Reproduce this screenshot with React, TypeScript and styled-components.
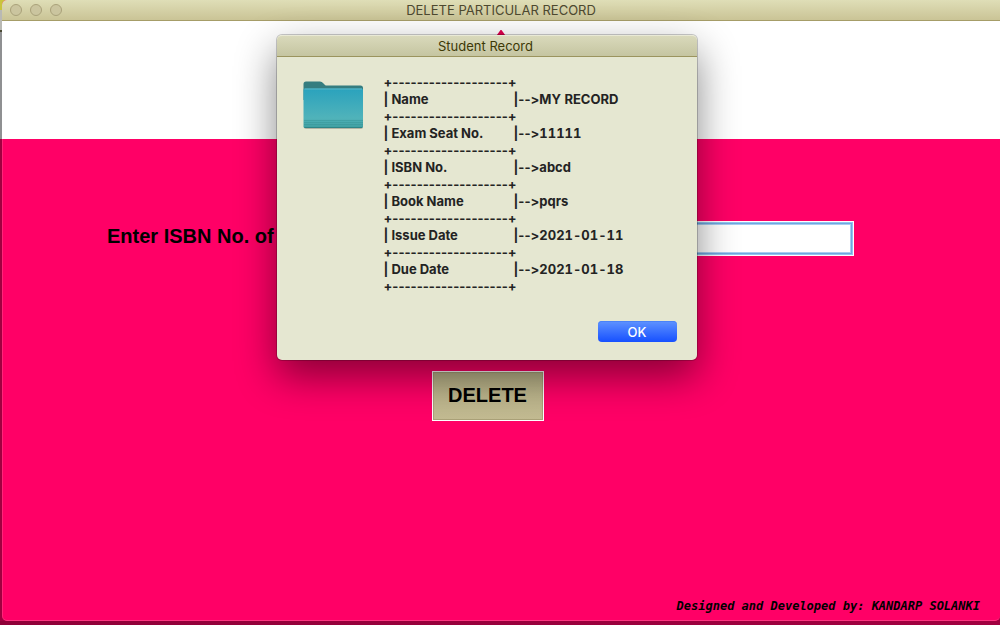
import React from "react";
import styled, { createGlobalStyle } from "styled-components";

const GlobalStyle = createGlobalStyle`
  * { box-sizing: border-box; }
  body { margin: 0; font-family: Inter, "Liberation Sans", sans-serif; }
`;

const Desktop = styled.div`
  display: flex;
  min-height: 100vh;
  padding: 0 0 4px 2px;
  overflow: hidden;
  background:
    linear-gradient(90deg, #8f0038, #a10040) bottom / 100% 4px no-repeat,
    linear-gradient(#c9c43e 0 10px, #b9b9b4 10px 30px, #4b4a35 30px 32px, #8f9092 32px 139px, #a00040 139px);
`;

const Window = styled.div`
  position: relative;
  flex: 1;
  display: flex;
  flex-direction: column;
  background: #ff0066;
  border-radius: 5px 0 5px 5px;
  border-bottom: 1px solid #ff3380;
  border-left: 1px solid #ff2478;
`;

const TitleBar = styled.header`
  position: relative;
  display: flex;
  align-items: center;
  justify-content: center;
  height: 21px;
  margin-left: -1px;
  background: linear-gradient(#dfdeb7, #cac496);
  border-bottom: 1px solid #a69d68;
  border-top-left-radius: 5px;
`;

const Title = styled.h1`
  margin: 0;
  font-size: 13px;
  line-height: 20px;
  font-weight: 400;
  color: #4d4930;
`;

const Lights = styled.div`
  position: absolute;
  left: 8px;
  top: 4px;
  display: flex;
  gap: 8px;
`;

const Light = styled.button`
  width: 12px;
  height: 12px;
  padding: 0;
  border: 1px solid #aaa27a;
  border-radius: 50%;
  background: #cbc59f;
`;

const Banner = styled.div`
  display: flex;
  justify-content: center;
  height: 118px;
  margin-left: -1px;
  padding-top: 9px;
  background: #fff;
`;

const Content = styled.main`
  flex: 1;
  display: flex;
  flex-direction: column;
  padding: 82px 20px 6px 104px;
`;

const Field = styled.div`
  display: flex;
  align-items: flex-start;
  justify-content: space-between;
  padding-right: 126px;
`;

const Label = styled.label`
  font: bold 20px/30px "Liberation Sans", Arial, sans-serif;
  color: #000;
`;

const TextBox = styled.input`
  width: 350px;
  height: 35px;
  padding: 0 8px;
  font: 16px "Liberation Sans", Arial, sans-serif;
  background: #fff;
  border: 1px solid #fff;
  outline: 0;
  box-shadow: inset 0 0 0 1px #94c4f0, inset 0 0 0 2px #6fa8e0, inset 0 0 0 3px #a8cdf2;
`;

const DeleteButton = styled.button`
  align-self: center;
  width: 112px;
  height: 50px;
  margin: 115px 112px 0 0;
  padding: 0 0 2px;
  border: 1px solid #fff;
  box-shadow: inset 0 0 0 1px #aaa178;
  background: linear-gradient(#b8b187, #c3bb92);
  font: bold 20px "Liberation Sans", Arial, sans-serif;
  color: #000;
`;

const Credit = styled.footer`
  margin-top: auto;
  text-align: right;
  font: italic bold 12px/16px "DejaVu Sans Mono", monospace;
  color: #000;
`;

const Dialog = styled.section`
  position: absolute;
  top: 35px;
  left: calc(50% - 225px);
  width: 420px;
  border-radius: 5px;
  background: #e5e7d1;
  box-shadow: 0 0 0 1px rgba(0, 0, 0, 0.2), 0 16px 40px rgba(0, 0, 0, 0.48);
`;

const DialogTitle = styled.h2`
  margin: 0;
  height: 22px;
  padding-right: 2px;
  text-align: center;
  font-size: 13px;
  line-height: 21px;
  font-weight: 400;
  color: #3d3906;
  background: linear-gradient(#d9d9bb, #c5c5a1);
  border-top: 1px solid #e9e9d6;
  border-bottom: 1px solid #9b945e;
  border-radius: 5px 5px 0 0;
`;

const DialogBody = styled.div`
  display: flex;
  align-items: flex-start;
  gap: 20px;
  padding: 17px 20px 0 26px;
`;

const Folder = styled.svg`
  flex: none;
  margin-top: 6px;
`;

const Record = styled.table`
  border-collapse: collapse;
  font-size: 13px;
  line-height: 17px;
  font-feature-settings: "calt" 0;
  color: #232323;
  white-space: pre;
  td, th { padding: 0; text-align: left; font-weight: 700; }
  th { width: 130px; }
`;

const Value = styled.span`
  font-feature-settings: "calt" 0, "tnum" 1;
`;

const Actions = styled.div`
  display: flex;
  justify-content: flex-end;
  padding: 26px 20px 18px;
`;

const OkButton = styled.button`
  width: 79px;
  height: 21px;
  padding: 0;
  border: 0;
  border-radius: 4px;
  background: linear-gradient(#5f93ff, #1650ff);
  box-shadow: inset 0 1px #4a82f8;
  color: #fff;
  font: 500 13px Inter, sans-serif;
`;

const rows = [
  ["Name", "MY RECORD"],
  ["Exam Seat No.", "11111"],
  ["ISBN No.", "abcd"],
  ["Book Name", "pqrs"],
  ["Issue Date", "2021-01-11"],
  ["Due Date", "2021-01-18"],
];

const RULE = "+-------------------+";

function Rule() {
  return <tr><td colSpan={2}>{RULE}</td></tr>;
}

export default function App() {
  return (
    <Desktop>
      <GlobalStyle />
      <Window>
        <TitleBar>
          <Lights>
            <Light aria-label="Close" />
            <Light aria-label="Minimize" />
            <Light aria-label="Zoom" />
          </Lights>
          <Title>DELETE PARTICULAR RECORD</Title>
        </TitleBar>
        <Banner>
          <svg width="80" height="60" viewBox="0 0 80 60" aria-hidden="true">
            <path d="M39.500 0H40.500L80 55V60H0V55Z" fill="#e0004f" />
          </svg>
        </Banner>
        <Content>
          <Field>
            <Label htmlFor="isbn">Enter ISBN No. of</Label>
            <TextBox id="isbn" />
          </Field>
          <DeleteButton>DELETE</DeleteButton>
          <Credit>Designed and Developed by: KANDARP SOLANKI</Credit>
        </Content>
        <Dialog role="dialog" aria-labelledby="dialog-title">
          <DialogTitle id="dialog-title">Student Record</DialogTitle>
          <DialogBody>
            <Folder width="61" height="50" viewBox="0 0 61 50" aria-hidden="true">
              <defs>
                <linearGradient id="front" x1="0" y1="0" x2="0" y2="1">
                  <stop offset="0" stopColor="#2aa2bd" />
                  <stop offset="0.75" stopColor="#50b3ba" />
                  <stop offset="1" stopColor="#3f9fa0" />
                </linearGradient>
              </defs>
              <rect x="1" y="8" width="59" height="41" rx="2" fill="#000" opacity="0.22" />
              <path d="M0.500 4Q0.500 1.500 3 1.500H17Q19 1.500 20 3L22 5Q22.500 5.500 24 5.500H57.500Q60 5.500 60 8V20H0.500Z" fill="#357d80" />
              <rect x="0.500" y="8.500" width="59.500" height="39.500" rx="1.500" fill="url(#front)" />
              <path d="M1.500 9H59" stroke="#5cb8c8" strokeWidth="1" />
              <path d="M1 40.500H60M1 42.500H60M1 44.500H60" stroke="#338f92" strokeWidth="1" opacity="0.4" />
              <path d="M1.500 47.500H59" stroke="#2d8587" strokeWidth="1" />
            </Folder>
            <Record>
              <tbody>
                <Rule />
                {rows.map(([name, value]) => (
                  <React.Fragment key={name}>
                    <tr>
                      <th scope="row">| {name}</th>
                      <td>{"|-->"}<Value>{value}</Value></td>
                    </tr>
                    <Rule />
                  </React.Fragment>
                ))}
              </tbody>
            </Record>
          </DialogBody>
          <Actions>
            <OkButton>OK</OkButton>
          </Actions>
        </Dialog>
      </Window>
    </Desktop>
  );
}
